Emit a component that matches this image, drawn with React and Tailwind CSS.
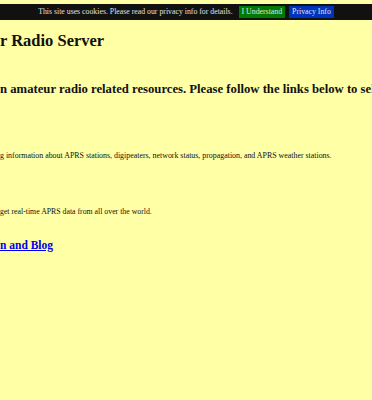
import React from "react";

const App = () => {
  return (
    <div className="relative w-[372px] h-[400px] overflow-hidden bg-[#ffffa5] text-[#111] font-['Liberation_Serif',serif]">
      <div className="absolute top-[4px] left-0 right-0 h-[16px] bg-[#111111] flex items-center justify-center gap-[4px] text-[7.8px] text-[#e0e0e0]">
        <span className="mr-[2px]">This site uses cookies. Please read our privacy info for details.</span>
        <span className="bg-[#007a00] px-[3px] h-[12px] flex items-center">I Understand</span>
        <span className="bg-[#0033bb] px-[3px] h-[12px] flex items-center">Privacy Info</span>
      </div>

      <div className="pt-[31px] whitespace-nowrap">
        <h1 className="text-[16.5px] font-bold leading-[20px]">r Radio Server</h1>
        <h2 className="mt-[30px] text-[12.7px] font-bold leading-[16px]">
          n amateur radio related resources. Please follow the links below to select
        </h2>
        <p className="mt-[54px] text-[7.9px] leading-[10px]">
          g information about APRS stations, digipeaters, network status, propagation, and APRS weather stations.
        </p>
        <p className="mt-[46px] text-[7.8px] leading-[10px]">
          get real-time APRS data from all over the world.
        </p>
        <a href="#" className="block mt-[21px] text-[11.5px] font-bold leading-[14px] text-[#0000ee] underline">
          n and Blog
        </a>
      </div>
    </div>
  );
};

export default App;
